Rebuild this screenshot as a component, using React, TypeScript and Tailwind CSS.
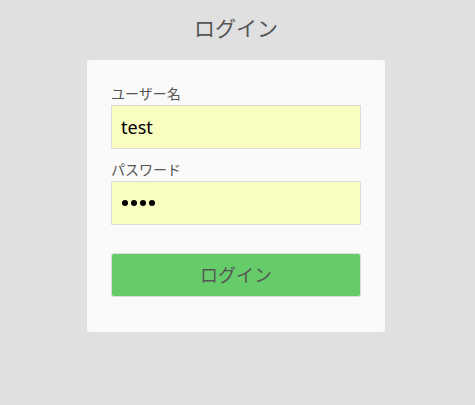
export default function App() {
  return (
    <div className="min-h-[405px] bg-[#e0e0e0] font-['Noto_Sans','Noto_Sans_CJK_JP',sans-serif] text-[#555]">
      <div className="w-[472px] pt-[13px]">
        <h1 className="text-center text-[21px] leading-[30px]">ログイン</h1>
        <div className="mx-auto mt-[17px] w-[298px] rounded-[3px] bg-[#fafafa] px-6 pt-6 pb-[35px]">
          <label className="mb-px block text-sm leading-5">ユーザー名</label>
          <div className="flex h-[44px] items-center border border-[#dcdcdc] bg-[#fafdc0] px-[9px] text-lg text-black">
            test
          </div>
          <label className="mt-[11px] mb-px block text-sm leading-5">パスワード</label>
          <div className="flex h-[44px] items-center gap-[3px] border border-[#dcdcdc] bg-[#fafdc0] px-[10px]">
            <span className="size-[6px] rounded-full bg-black" />
            <span className="size-[6px] rounded-full bg-black" />
            <span className="size-[6px] rounded-full bg-black" />
            <span className="size-[6px] rounded-full bg-black" />
          </div>
          <button className="mt-[28px] h-[44px] w-full rounded-[3px] border border-[#dcdcdc] bg-[#66cc6a] text-lg text-[#555]">
            ログイン
          </button>
        </div>
      </div>
    </div>
  );
}
